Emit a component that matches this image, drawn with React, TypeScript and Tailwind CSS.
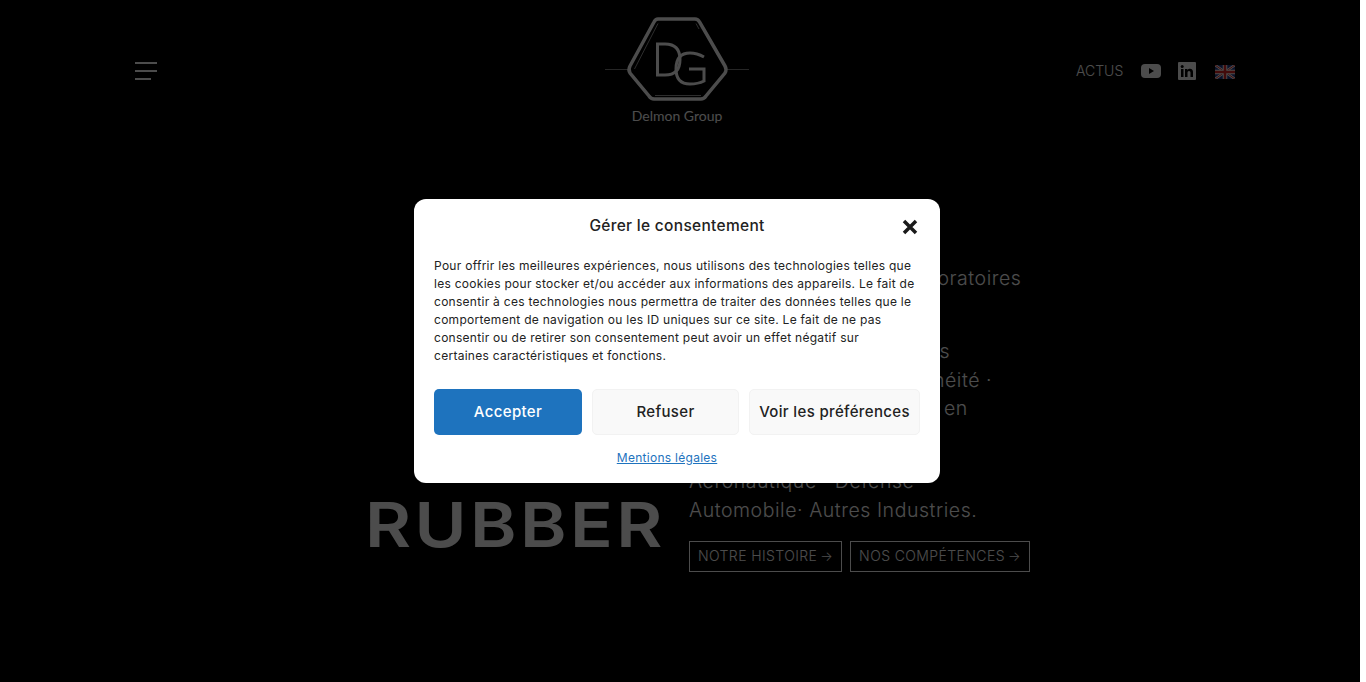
import React from 'react'

const bodyFont = { fontFamily: '"Inter", "Liberation Sans", sans-serif' }

function Logo() {
  return (
    <svg width="144" height="90" viewBox="0 0 144 90" fill="none">
      <path d="M0 54.500H23M122 54.500H144" stroke="#fff" strokeWidth="1" opacity="0.5" />
      <path d="M53 4H90Q93 4 94.500 7L120 51Q122 54.500 120 58L101 81Q99 84 96 84H49Q46 84 44 81L25 58Q23 54.500 25 51L49 7Q50.500 4 53 4Z" stroke="#fff" strokeWidth="3.500" />
      <path d="M53 8.500L29.500 54M50 80.500H96M91 8.500L94 14" stroke="#fff" strokeWidth="1" opacity="0.6" />
      <path d="M52.500 60V29H60Q75 29 75 44.500Q75 60 60 60Z" stroke="#fff" strokeWidth="3" />
      <path d="M99 42Q92 38 85 38Q71 38 71 54Q71 69 85 69Q93 69 99 66V54H84" stroke="#fff" strokeWidth="3" />
    </svg>
  )
}

export default function App() {
  return (
    <div className="flex bg-white">
      <div className="relative h-[682px] w-[1360px] shrink-0 overflow-hidden bg-black text-white" style={bodyFont}>
        <header className="flex h-[141px] items-start pl-[135px]">
          <div className="mt-[62px] flex w-[470px] flex-col gap-[6px]">
            <span className="h-[2px] w-[22px] bg-white" />
            <span className="h-[2px] w-[22px] bg-white" />
            <span className="h-[2px] w-[16px] bg-white" />
          </div>
          <div className="mt-[15px] flex w-[144px] flex-col items-center">
            <Logo />
            <span className="mt-[3px] text-[14px] leading-[16px]" style={{ fontFamily: '"Lato", sans-serif' }}>Delmon Group</span>
          </div>
          <div className="mt-[60px] ml-[327px] flex items-center">
            <span className="text-[14px] leading-[22px] font-light">ACTUS</span>
            <svg className="ml-[18px]" width="20" height="14" viewBox="0 0 20 14">
              <rect width="20" height="14" rx="4" fill="#fff" />
              <path d="M8 4L13 7L8 10Z" fill="#000" />
            </svg>
            <svg className="ml-[17px]" width="18" height="18" viewBox="0 0 18 18">
              <rect width="18" height="18" rx="1" fill="#fff" />
              <rect x="3" y="7" width="2.500" height="8" fill="#000" />
              <circle cx="4.200" cy="4.500" r="1.500" fill="#000" />
              <path d="M7 7H9.400V8.200C10 7.300 11 6.800 12 6.800C14 6.800 15 8 15 10.200V15H12.500V10.800C12.500 9.700 12 9 11 9C10 9 9.500 9.700 9.500 10.800V15H7Z" fill="#000" />
            </svg>
            <svg className="ml-[19px] mt-[2px]" width="20" height="14" viewBox="0 0 20 14">
              <rect width="20" height="14" fill="#1f3a8a" />
              <path d="M0 0L20 14M20 0L0 14" stroke="#fff" strokeWidth="2.500" />
              <path d="M0 0L20 14M20 0L0 14" stroke="#dc2626" strokeWidth="1" />
              <path d="M10 0V14M0 7H20" stroke="#fff" strokeWidth="4.500" />
              <path d="M10 0V14M0 7H20" stroke="#dc2626" strokeWidth="2.500" />
            </svg>
          </div>
        </header>

        <main className="flex items-start pl-[365px]">
          <div className="w-[324px] pt-[349px]">
            <h1 className="origin-left scale-x-[1.14] text-[62px] leading-[70px] font-semibold tracking-[3px]">RUBBER</h1>
          </div>
          <div className="w-[345px] pt-[123px] text-[19.500px] leading-[28.800px] font-light tracking-[0.550px]">
            <p>Formulation Mélange, Laboratoires</p>
            <p className="mt-[44px]">Composés de caoutchoucs</p>
            <p>Qualité · Audits · Homogénéité ·</p>
            <p>Production européenne et en</p>
            <p className="mt-[44px]">Aéronautique · Défense ·</p>
            <p>Automobile· Autres Industries.</p>
            <div className="mt-[16px] flex gap-[8px] text-[14px] font-light tracking-[0.400px]">
              <a className="flex h-[31px] items-center gap-[3px] border border-white px-[8px]">NOTRE HISTOIRE <span className="text-[13px]">→</span></a>
              <a className="flex h-[31px] items-center gap-[3px] border border-white px-[8px]">NOS COMPÉTENCES <span className="text-[13px]">→</span></a>
            </div>
          </div>
        </main>

        <div className="absolute inset-0 bg-black/70" />

        <div className="absolute top-[199px] left-[414px] flex h-[284px] w-[526px] flex-col rounded-[12px] bg-white px-[20px] text-[#222]">
          <div className="relative mt-[17px] text-center text-[15.500px] leading-[20px] font-medium tracking-[0.300px]">
            Gérer le consentement
            <svg className="absolute top-[3px] right-[2px]" width="16" height="16" viewBox="0 0 16 16">
              <path d="M2 2L14 14M14 2L2 14" stroke="#1a1a1a" strokeWidth="3.500" />
            </svg>
          </div>
          <p className="mt-[21px] text-[12px] leading-[18px] tracking-[0.280px]">
            Pour offrir les meilleures expériences, nous utilisons des technologies telles que les cookies pour stocker et/ou accéder aux informations des appareils. Le fait de consentir à ces technologies nous permettra de traiter des données telles que le comportement de navigation ou les ID uniques sur ce site. Le fait de ne pas consentir ou de retirer son consentement peut avoir un effet négatif sur<br />certaines caractéristiques et fonctions.
          </p>
          <div className="mt-[24px] flex gap-[10px] text-[15px] font-medium tracking-[0.350px]">
            <button className="h-[46px] w-[148px] rounded-[5px] bg-[#1e73be] text-white">Accepter</button>
            <button className="h-[46px] w-[147px] rounded-[5px] border border-[#f2f2f2] bg-[#f9f9f9]">Refuser</button>
            <button className="h-[46px] w-[171px] rounded-[5px] border border-[#f2f2f2] bg-[#f9f9f9]">Voir les préférences</button>
          </div>
          <a className="mt-[14px] pr-[20px] text-center text-[12px] leading-[18px] tracking-[0.280px] text-[#1e73be] underline">Mentions légales</a>
        </div>
      </div>
    </div>
  )
}
